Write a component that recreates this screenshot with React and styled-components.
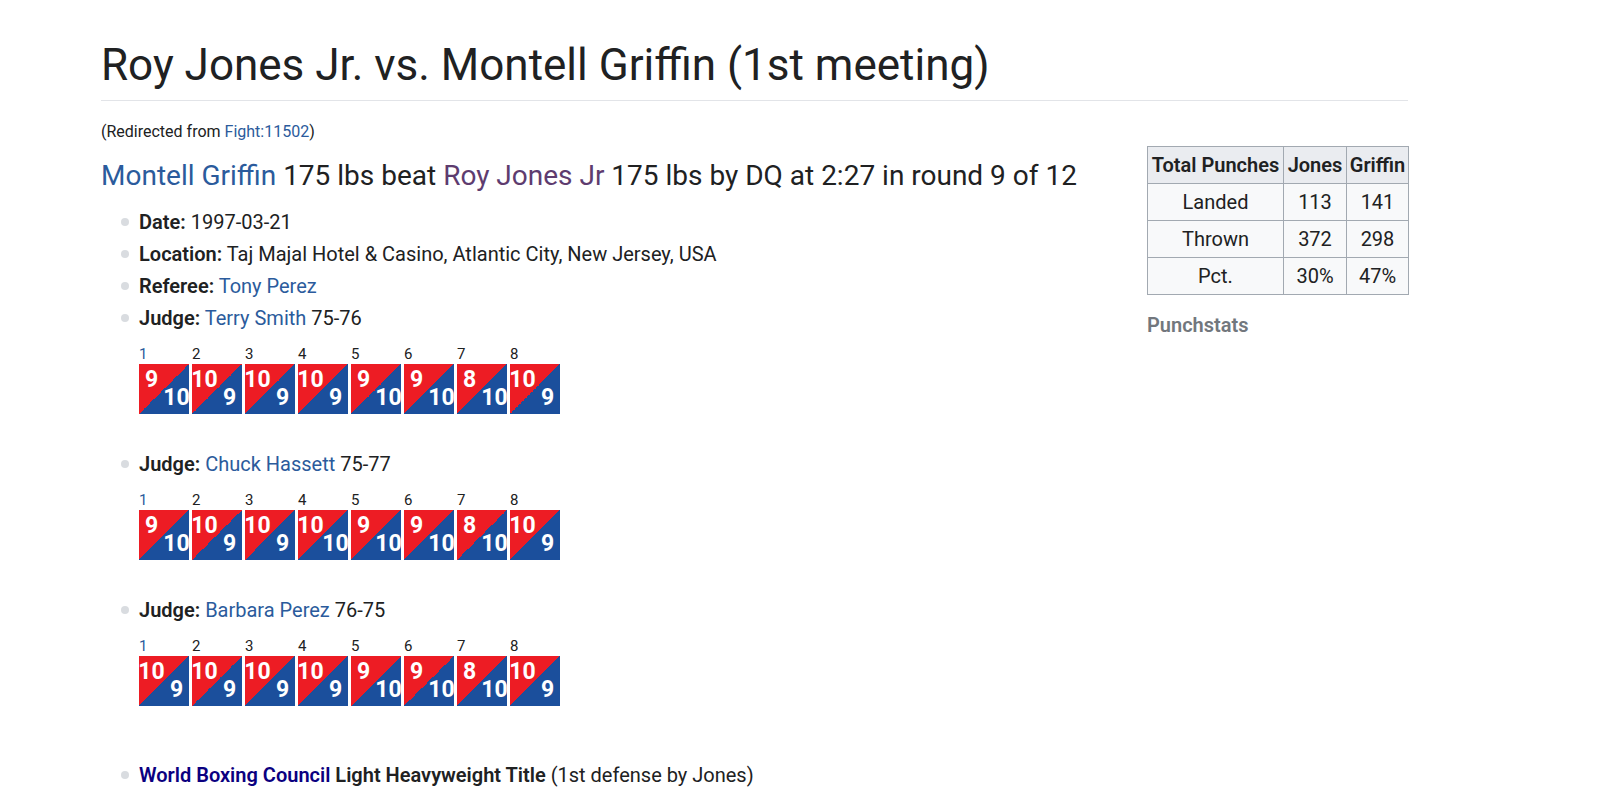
import React from "react";
import styled, { createGlobalStyle } from "styled-components";

const Global = createGlobalStyle`
  html, body { margin: 0; padding: 0; background: #ffffff; }
  body { font-family: Roboto, "Noto Sans", "Liberation Sans", sans-serif; color: #202122; }
  a { text-decoration: none; }
`;

const Page = styled.div`
  width: 1307px;
  padding: 38px 0 0 101px;
`;

const Title = styled.h1`
  margin: 0;
  font-weight: 400;
  font-size: 44px;
  line-height: 54px;
  padding-bottom: 8px;
  border-bottom: 1px solid #e2e4e8;
`;

const Redirect = styled.div`
  margin-top: 21px;
  font-size: 16px;
  line-height: 20px;
  color: #202122;
`;

const Link = styled.a`
  color: ${(p) => (p.$visited ? "#5e3c6f" : p.$dark ? "#0b0080" : "#2b5b9c")};
  font-weight: ${(p) => (p.$bold ? 600 : "inherit")};
`;

const Body = styled.div`
  display: flex;
  align-items: flex-start;
  gap: 20px;
`;

const Main = styled.div`
  flex: 1;
`;

const Result = styled.div`
  margin-top: 16px;
  font-size: 28px;
  line-height: 36px;
`;

const List = styled.ul`
  list-style: none;
  margin: 12px 0 0 0;
  padding: 0 0 0 38px;
  font-size: 20px;
  line-height: 32px;
`;

const Item = styled.li`
  position: relative;
  margin-top: ${(p) => p.$gap || 0}px;
  &::before {
    content: "";
    position: absolute;
    left: -18px;
    top: 12px;
    width: 8px;
    height: 8px;
    border-radius: 50%;
    background: #d9dce0;
  }
`;

const Label = styled.b`
  font-weight: 600;
`;

const Cards = styled.div`
  display: flex;
  gap: 3px;
  margin: 11px 0 34px 0;
`;

const Round = styled.div`
  display: flex;
  flex-direction: column;
  width: 50px;
`;

const RoundNo = styled.span`
  font-size: 15px;
  line-height: 19px;
  color: ${(p) => (p.$link ? "#2b5b9c" : "#202122")};
`;

const Box = styled.div`
  width: 50px;
  height: 50px;
  display: grid;
  grid-template-columns: 25px 25px;
  grid-template-rows: 25px 25px;
  background: linear-gradient(to bottom right, #ed1c24 50%, #1b4f9c 50%);
  color: #ffffff;
  font-weight: 700;
  font-size: 23px;
  line-height: 18px;
`;

const Red = styled.span`
  grid-column: 1;
  grid-row: 1;
  align-self: end;
  justify-self: center;
  white-space: nowrap;
`;

const Blue = styled.span`
  grid-column: 2;
  grid-row: 2;
  align-self: start;
  justify-self: center;
  white-space: nowrap;
`;

const Side = styled.aside`
  margin-top: 4px;
  width: 261px;
`;

const Table = styled.table`
  border-collapse: collapse;
  table-layout: fixed;
  font-size: 20px;
  line-height: 28px;
  width: 261px;
  th, td {
    border: 1px solid #a2a9b1;
    padding: 4px 2px;
    text-align: center;
    white-space: nowrap;
  }
  th {
    background: #eaecf0;
    font-weight: 600;
  }
  th:nth-child(1) { width: 131px; }
  th:nth-child(2) { width: 58px; }
  th:nth-child(3) { width: 57px; }
  td {
    background: #f8f9fa;
  }
`;

const Punchstats = styled.div`
  margin-top: 16px;
  font-size: 20px;
  line-height: 28px;
  font-weight: 600;
  color: #72777d;
`;

const judges = [
  {
    name: "Terry Smith",
    score: "75-76",
    rounds: [[9, 10], [10, 9], [10, 9], [10, 9], [9, 10], [9, 10], [8, 10], [10, 9]],
  },
  {
    name: "Chuck Hassett",
    score: "75-77",
    rounds: [[9, 10], [10, 9], [10, 9], [10, 10], [9, 10], [9, 10], [8, 10], [10, 9]],
  },
  {
    name: "Barbara Perez",
    score: "76-75",
    rounds: [[10, 9], [10, 9], [10, 9], [10, 9], [9, 10], [9, 10], [8, 10], [10, 9]],
  },
];

function Scorecard({ rounds }) {
  return (
    <Cards>
      {rounds.map(([a, b], i) => (
        <Round key={i}>
          <RoundNo $link={i === 0}>{i + 1}</RoundNo>
          <Box>
            <Red>{a}</Red>
            <Blue>{b}</Blue>
          </Box>
        </Round>
      ))}
    </Cards>
  );
}

export default function App() {
  return (
    <>
      <Global />
      <Page>
        <Title>Roy Jones Jr. vs. Montell Griffin (1st meeting)</Title>
        <Redirect>
          (Redirected from <Link href="#">Fight:11502</Link>)
        </Redirect>
        <Body>
          <Main>
            <Result>
              <Link href="#">Montell Griffin</Link> 175 lbs beat{" "}
              <Link href="#" $visited>Roy Jones Jr</Link> 175 lbs by DQ at 2:27 in round 9 of 12
            </Result>
            <List>
              <Item>
                <Label>Date:</Label> 1997-03-21
              </Item>
              <Item>
                <Label>Location:</Label> Taj Majal Hotel &amp; Casino, Atlantic City, New Jersey, USA
              </Item>
              <Item>
                <Label>Referee:</Label> <Link href="#">Tony Perez</Link>
              </Item>
              {judges.map((j) => (
                <Item key={j.name}>
                  <Label>Judge:</Label> <Link href="#">{j.name}</Link> {j.score}
                  <Scorecard rounds={j.rounds} />
                </Item>
              ))}
              <Item $gap={53}>
                <Link href="#" $dark $bold>World Boxing Council</Link> <Label>Light Heavyweight Title</Label> (1st defense by Jones)
              </Item>
            </List>
          </Main>
          <Side>
            <Table>
              <thead>
                <tr>
                  <th>Total Punches</th>
                  <th>Jones</th>
                  <th>Griffin</th>
                </tr>
              </thead>
              <tbody>
                <tr><td>Landed</td><td>113</td><td>141</td></tr>
                <tr><td>Thrown</td><td>372</td><td>298</td></tr>
                <tr><td>Pct.</td><td>30%</td><td>47%</td></tr>
              </tbody>
            </Table>
            <Punchstats>Punchstats</Punchstats>
          </Side>
        </Body>
      </Page>
    </>
  );
}
